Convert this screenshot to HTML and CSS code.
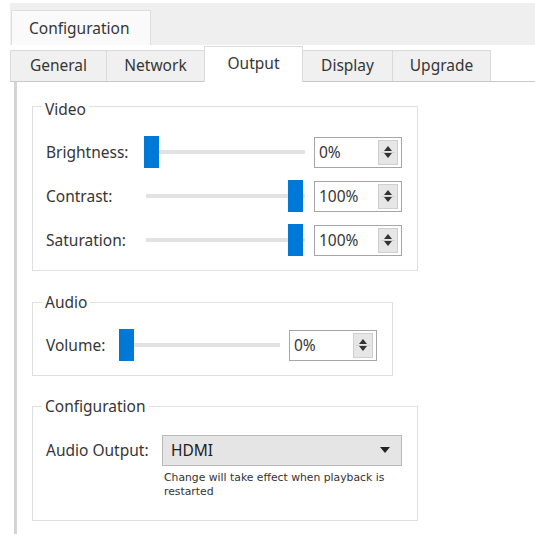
FILE: index.html
```html
<!DOCTYPE html>
<html lang="en">
<head>
  <meta charset="UTF-8" />
  <title>Configuration</title>
  <link rel="stylesheet" href="styles.css">
</head>
<body>
  <div class="top-strip">
    <div class="top-tab">Configuration</div>
  </div>

  <div class="tabs">
    <div class="tab tab-general">General</div>
    <div class="tab tab-network">Network</div>
    <div class="tab tab-output active">Output</div>
    <div class="tab tab-display">Display</div>
    <div class="tab tab-upgrade">Upgrade</div>
  </div>

  <div class="panel">
    <fieldset class="group group-video">
      <legend>Video</legend>
      <div class="row">
        <span class="label">Brightness:</span>
        <div class="slider"><div class="handle"></div></div>
        <div class="spin"><span>0%</span><div class="spin-btn"><i class="up"></i><i class="down"></i></div></div>
      </div>
      <div class="row">
        <span class="label">Contrast:</span>
        <div class="slider"><div class="handle max"></div></div>
        <div class="spin"><span>100%</span><div class="spin-btn"><i class="up"></i><i class="down"></i></div></div>
      </div>
      <div class="row">
        <span class="label">Saturation:</span>
        <div class="slider"><div class="handle max"></div></div>
        <div class="spin"><span>100%</span><div class="spin-btn"><i class="up"></i><i class="down"></i></div></div>
      </div>
    </fieldset>

    <fieldset class="group group-audio">
      <legend>Audio</legend>
      <div class="row">
        <span class="label label-volume">Volume:</span>
        <div class="slider"><div class="handle"></div></div>
        <div class="spin"><span>0%</span><div class="spin-btn"><i class="up"></i><i class="down"></i></div></div>
      </div>
    </fieldset>

    <fieldset class="group group-config">
      <legend>Configuration</legend>
      <div class="row">
        <span class="label label-output">Audio Output:</span>
        <div class="select"><span>HDMI</span><i class="caret"></i></div>
      </div>
      <p class="note">Change will take effect when playback is<br>restarted</p>
    </fieldset>
  </div>
</body>
</html>
```

FILE: styles.css
```css
body {
  margin: 0;
  background: #fff;
  color: #363636;
  font-family: "Noto Sans", "Open Sans", sans-serif;
  font-size: 15.5px;
  overflow: hidden;
}

/* outer tab strip */
.top-strip {
  margin: 3px 0 0 10px;
  height: 42px;
  background: #efefef;
  display: flex;
  align-items: flex-end;
}

.top-tab {
  margin-left: 1px;
  width: 121px;
  height: 34px;
  padding-left: 17px;
  line-height: 34px;
  background: #fafafa;
  border: 1px solid #dedede;
  border-bottom: none;
}

/* inner tabs */
.tabs {
  margin: 2px 0 0 10px;
  height: 34px;
  display: flex;
  align-items: flex-end;
  border-bottom: 1px solid #c9c9c9;
}

.tab {
  height: 31px;
  line-height: 29px;
  text-align: center;
  background: #f0f0f0;
  border: 1px solid #dadada;
  border-bottom: none;
  margin-right: -1px;
  box-sizing: border-box;
}

.tab-general { width: 97px; }
.tab-network { width: 99px; }
.tab-output  { width: 99px; }
.tab-display { width: 91px; }
.tab-upgrade { width: 99px; }

.tab.active {
  height: 36px;
  line-height: 33px;
  background: #fff;
  position: relative;
  z-index: 1;
  margin-bottom: -1px;
}

/* page body */
.panel {
  margin-left: 14px;
  border-left: 3px solid #d4d4d4;
  padding: 11px 0 0 15px;
  height: 452px;
  box-sizing: border-box;
}

.group {
  margin: 0;
  padding: 20px 15px 14px 13px;
  border: 1px solid #dfdfdf;
  box-sizing: border-box;
}

.group legend {
  padding: 0 3px;
  margin-left: -4px;
  line-height: 20px;
}

.group-video  { width: 385px; padding-top: 17px; }
.group-video legend { padding-top: 6px; }
.group-audio  { width: 360px; margin-top: 21px; padding-top: 17px; }
.group-config { width: 382px; margin-top: 20px; padding-top: 18px; padding-bottom: 21px; }

.row {
  display: flex;
  align-items: center;
  height: 32px;
}

.row + .row { margin-top: 12px; }

.label { width: 98px; }
.label-volume { width: 73px; }
.label-output { width: 116px; }

/* slider */
.slider {
  position: relative;
  width: 161px;
  height: 32px;
  margin-right: 9px;
}

.slider::before {
  content: "";
  position: absolute;
  left: 2px;
  right: 0;
  top: 14px;
  height: 4px;
  background: #e2e2e2;
}

.handle {
  position: absolute;
  left: 0;
  top: 0;
  width: 15px;
  height: 32px;
  background: #0078d7;
}

.handle.max {
  left: auto;
  right: 2px;
}

/* spin box */
.spin {
  width: 88px;
  height: 31px;
  box-sizing: border-box;
  border: 1px solid #a6a6a6;
  display: flex;
  align-items: center;
  justify-content: space-between;
  padding: 0 3px 0 4px;
}

.spin-btn {
  width: 20px;
  height: 25px;
  box-sizing: border-box;
  background: #e6e6e6;
  border: 1px solid #cfcfcf;
  display: flex;
  flex-direction: column;
  align-items: center;
  justify-content: center;
  gap: 2px;
}

.spin-btn i {
  width: 0;
  height: 0;
  border-left: 4px solid transparent;
  border-right: 4px solid transparent;
}

.spin-btn .up   { border-bottom: 5px solid #333; }
.spin-btn .down { border-top: 5px solid #333; }

.spin-btn .up::after {
  content: "";
  display: block;
  width: 14px;
  height: 1px;
  margin: 6px 0 0 -7px;
  background: #d0d0d0;
}

/* drop-down */
.select {
  width: 240px;
  height: 31px;
  box-sizing: border-box;
  background: #e5e5e5;
  border: 1px solid #b9b9b9;
  display: flex;
  align-items: center;
  justify-content: space-between;
  padding: 0 11px 0 8px;
  color: #222;
}

.caret {
  width: 0;
  height: 0;
  border-left: 5px solid transparent;
  border-right: 5px solid transparent;
  border-top: 6px solid #222;
}

.note {
  margin: 5px 0 0 118px;
  font-family: "DejaVu Sans", sans-serif;
  font-size: 10.8px;
  line-height: 14px;
  color: #333;
}
```
